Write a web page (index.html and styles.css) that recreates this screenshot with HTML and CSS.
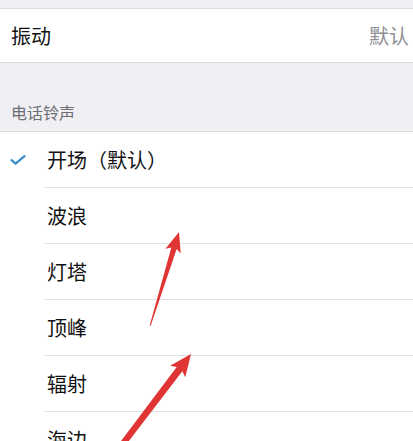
FILE: index.html
```html
<!DOCTYPE html>
<html lang="zh-CN">
<head>
  <meta charset="UTF-8" />
  <meta name="viewport" content="width=device-width, initial-scale=1.0"/>
  <title>电话铃声</title>
  <link rel="stylesheet" href="styles.css">
</head>
<body>
  <div class="page">
    <div class="top-gap"></div>

    <div class="row">
      <span class="row-title">振动</span>
      <span class="row-value">默认</span>
    </div>

    <div class="section-head">电话铃声</div>

    <ul class="tone-list">
      <li class="tone">
        <span class="mark">
          <svg width="16" height="10" viewBox="0 0 16 10">
            <path d="M1.5 5.2 L5.6 8.6 L14.5 1.2" fill="none" stroke="#3a8dc8" stroke-width="2.2" stroke-linecap="round" stroke-linejoin="round"/>
          </svg>
        </span>
        <span class="cell">开场（默认）</span>
      </li>
      <li class="tone"><span class="mark"></span><span class="cell">波浪</span></li>
      <li class="tone"><span class="mark"></span><span class="cell">灯塔</span></li>
      <li class="tone"><span class="mark"></span><span class="cell">顶峰</span></li>
      <li class="tone"><span class="mark"></span><span class="cell">辐射</span></li>
      <li class="tone"><span class="mark"></span><span class="cell">海边</span></li>
    </ul>

    <!-- 标注箭头 -->
    <svg class="arrows" width="413" height="441" viewBox="0 0 413 441">
      <g transform="translate(179 232) rotate(-72.9)">
        <polygon points="0,0 -20,-8 -17,-2.8 -98,-0.5 -98,0.5 -17,2.8 -20,8" fill="#e03535"/>
      </g>
      <g transform="translate(191 354) rotate(-52.8)">
        <polygon points="0,0 -22,-9.5 -19,-3.5 -140,-3 -140,3 -19,3.5 -22,9.5" fill="#e03535"/>
      </g>
    </svg>
  </div>
</body>
</html>
```

FILE: styles.css
```css
body {
  margin: 0;
  font-family: "Noto Sans CJK SC", "Noto Sans", sans-serif;
  background-color: #efeff4;
  color: #111;
}
.page {
  position: relative;
  width: 413px;
  height: 441px;
  overflow: hidden;
}
.top-gap {
  height: 8px;
  border-bottom: 1px solid #dcdce0;
}
.row {
  height: 53px;
  background-color: #fff;
  display: flex;
  align-items: center;
  justify-content: space-between;
  padding: 0 4px 0 11px;
  border-bottom: 1px solid #dcdce0;
  font-size: 20px;
}
.row-value {
  color: #8e8e93;
}
.section-head {
  height: 69px;
  box-sizing: border-box;
  display: flex;
  align-items: flex-end;
  padding: 0 0 9px 11px;
  font-size: 16px;
  line-height: 20px;
  color: #6d6d72;
  border-bottom: 1px solid #dcdce0;
}
.tone-list {
  list-style: none;
  margin: 0;
  padding: 0;
  background-color: #fff;
}
.tone {
  display: flex;
}
.mark {
  width: 45px;
  flex-shrink: 0;
  display: flex;
  align-items: center;
  padding-left: 10px;
  box-sizing: border-box;
}
.cell {
  flex: 1;
  height: 55px;
  display: flex;
  align-items: center;
  padding-left: 2px;
  font-size: 20px;
  border-bottom: 1px solid #e2e2e6;
}
.arrows {
  position: absolute;
  left: 0;
  top: 0;
}
```
